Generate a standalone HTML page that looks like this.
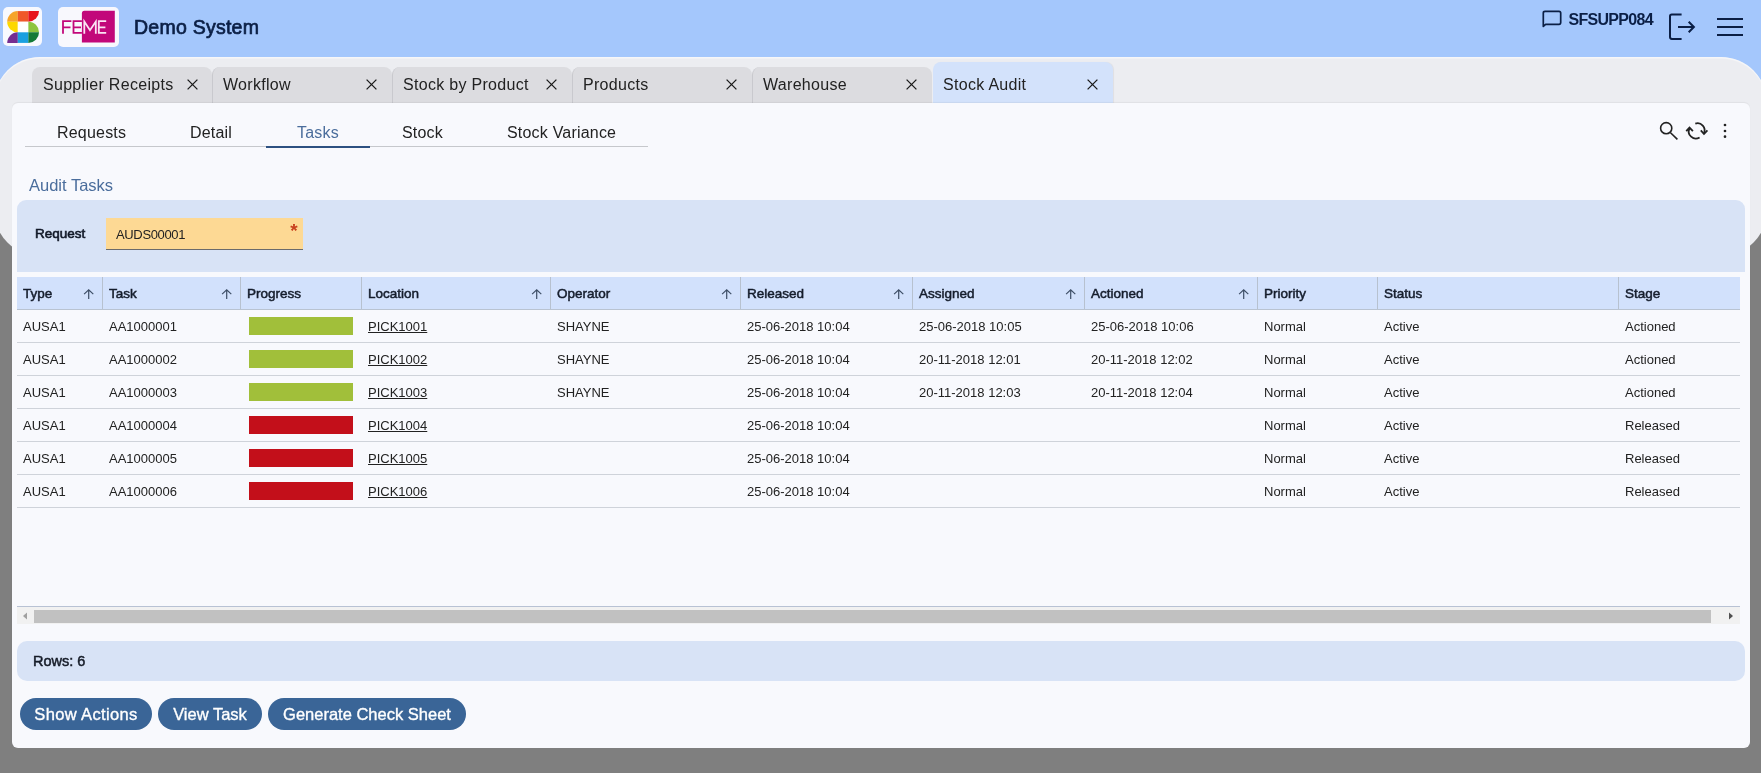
<!DOCTYPE html>
<html><head><meta charset="utf-8">
<style>
*{box-sizing:border-box;margin:0;padding:0}
html,body{width:1761px;height:773px;overflow:hidden}
body{position:relative;background:#7f7f7f;font-family:"Liberation Sans",sans-serif;color:#222}
.abs{position:absolute}
#root{position:absolute;left:0;top:0;width:1761px;height:773px;overflow:hidden;will-change:transform;background:#7f7f7f}
#hdr{left:0;top:0;width:1761px;height:140px;background:#a4c7fc}
#shape{left:-6px;top:57px;width:1773px;height:199px;border-radius:46px;background:#ecedf1;box-shadow:inset 0 1.5px 1px rgba(255,255,255,0.55)}
.logo{background:#f8f9fe;border-radius:6px}
#title{left:134px;top:16px;font-size:19.5px;letter-spacing:0.25px;font-weight:400;-webkit-text-stroke:0.7px #0b1f45;color:#0b1f45;white-space:nowrap}
#user{left:1568.5px;top:10.5px;font-size:16px;font-weight:700;letter-spacing:-0.7px;color:#0b1f45}
.tab{top:67px;height:36px;width:180px;border-left:1px solid #c9c9ce;background:#dcdce0;border-radius:8px 8px 0 0;font-size:16px;letter-spacing:0.3px;color:#222;white-space:nowrap}
.tab span{position:absolute;left:10px;top:9px}
.tab svg{position:absolute;left:153px;top:12px}
.tab.act{top:62px;height:41px;background:#d3e2fb;border-left:0;box-shadow:1px 0 1px rgba(0,0,0,0.06)}
.tab.act span{top:14px}
.tab.act svg{top:16.5px}
#panel{left:12px;top:103px;width:1738px;height:645px;background:#f8f9fd;border-radius:6px;box-shadow:0 -1px 1px rgba(0,0,0,0.05)}
.st{top:124px;font-size:16px;letter-spacing:0.2px;color:#222;white-space:nowrap}
#audit{left:29px;top:175.5px;font-size:16.5px;color:#4a6d9c;white-space:nowrap}
#filter{left:17px;top:200px;width:1728px;height:72px;background:#d8e3f6;border-radius:9px 9px 0 0}
#reqlbl{left:35px;top:225.5px;font-size:13.5px;font-weight:400;-webkit-text-stroke:0.6px #111827;color:#111827}
#inp{left:106px;top:218px;width:197px;height:32px;background:#fdd994;border-bottom:1px solid #6b6b6b}
#inp span{position:absolute;left:10px;top:9px;font-size:13px;letter-spacing:-0.35px;color:#222}
#inp i{position:absolute;left:184.2px;top:2.3px;font-style:normal;font-size:19px;color:#c8401e;font-weight:700}
#thead{left:17px;top:277px;width:1723px;height:33px;background:#d2e1fc;border-bottom:1px solid #b9c3d1}
.th{top:286px;font-size:13.5px;font-weight:400;-webkit-text-stroke:0.5px #151d2c;color:#151d2c;white-space:nowrap}
.sep{top:277px;width:1px;height:32px;background:#b7c1cf}
.arr{top:288.5px}
.rowb{left:17px;width:1723px;height:1px;background:#cfd3da}
.td{font-size:13px;color:#222;white-space:nowrap}
.bar{left:249px;width:104px;height:18px}
.lnk{text-decoration:underline}
#tbot{left:17px;top:606px;width:1723px;height:1px;background:#b8c2d4}
#sb{left:17px;top:607px;width:1723px;height:17px;background:#f1f1f1}
#thumb{left:34px;top:610px;width:1677px;height:13px;background:#c1c1c1}
#rows{left:17px;top:641px;width:1728px;height:40px;background:#d8e3f6;border-radius:10px}
#rows span{position:absolute;left:16px;top:11.5px;font-size:14.5px;font-weight:400;-webkit-text-stroke:0.5px #161c28;color:#161c28}
.btn{top:698px;height:32px;border-radius:16px;background:#3a6597;color:#fff;font-size:16.5px;white-space:nowrap}
.btn span{position:absolute;top:7px;left:0;width:100%;text-align:center;-webkit-text-stroke:0.35px #fff}
</style></head><body><div id="root">
<div id="hdr" class="abs"></div>
<div id="shape" class="abs"></div>

<!-- logos -->
<div class="abs logo" style="left:3.4px;top:7.4px;width:39px;height:39px;border-radius:5px"></div>
<svg class="abs" style="left:7px;top:11px" width="33" height="33" viewBox="-0.2 -0.1 33 33">
  <path d="M10.6 10.6L0 10.6A10.6 10.6 0 0 1 10.6 0Z" fill="#f6a42a"/>
  <rect x="10.6" y="0" width="10.65" height="10.65" fill="#f0582a"/>
  <path d="M21.2 0L31.799999999999997 0A10.6 10.6 0 0 1 21.2 10.6Z" fill="#e7141e"/>
  <path d="M10.6 10.6L10.6 21.2A10.6 10.6 0 0 1 0 10.6Z" fill="#fdd800"/>
  <rect x="10.6" y="10.6" width="10.6" height="10.6" fill="#ffffff"/>
  <path d="M21.2 21.2L21.2 10.6A10.6 10.6 0 0 1 31.799999999999997 21.2Z" fill="#8dc43f"/>
  <path d="M10.6 31.799999999999997L0 31.799999999999997A10.6 10.6 0 0 1 10.6 21.2Z" fill="#752d91"/>
  <rect x="10.6" y="21.2" width="10.65" height="10.6" fill="#1aa0e0"/>
  <path d="M21.2 21.2L31.799999999999997 21.2A10.6 10.6 0 0 1 21.2 31.799999999999997Z" fill="#137a38"/>
</svg>
<svg class="abs" style="left:58px;top:7px" width="61" height="40" viewBox="0 0 61 40">
  <rect x="0" y="0" width="61" height="40" rx="5" fill="#f8f8fd"/>
  <path d="M26.4 3.8H56.8V35.5H23.9V6.3Q23.9 3.8 26.4 3.8Z" fill="#c2077a"/>
  <path d="M5 26.8V14.15H13.4M5 20.35H12.5" fill="none" stroke="#c2077a" stroke-width="1.8"/>
  <path d="M23.9 14.15H15.5V25.9H23.9M15.5 20.35H23" fill="none" stroke="#c2077a" stroke-width="1.8"/>
  <path d="M26.3 26.8V14.6L32 23.2L37.8 14.6V26.8" fill="none" stroke="#fbe3f3" stroke-width="1.8" stroke-linejoin="miter"/>
  <path d="M48.2 14.15H40.8V25.9H48.2M40.8 20.35H47.4" fill="none" stroke="#fbe3f3" stroke-width="1.8"/>
</svg>

<div id="title" class="abs">Demo System</div>

<!-- header right -->
<svg class="abs" style="left:1541px;top:10px" width="22" height="19" viewBox="0 0 22 19">
  <path d="M2.3 16.4V3Q2.3 1.3 4 1.3H18Q19.7 1.3 19.7 3V12.6Q19.7 14.3 18 14.3H4.6Z" fill="none" stroke="#0b1f45" stroke-width="1.7" stroke-linejoin="round"/>
</svg>
<div id="user" class="abs">SFSUPP084</div>
<svg class="abs" style="left:1666px;top:12px" width="32" height="30" viewBox="0 0 32 30">
  <path d="M15.6 2.4H5.8Q4 2.4 4 4.2V25.1Q4 26.9 5.8 26.9H15.6" fill="none" stroke="#0b1f45" stroke-width="2"/>
  <path d="M12 15H28M22.7 9.7L27.9 15L22.7 20.3" fill="none" stroke="#0b1f45" stroke-width="2"/>
</svg>
<svg class="abs" style="left:1716px;top:16px" width="28" height="22" viewBox="0 0 28 22">
  <path d="M1 3H27M1 11H27M1 19H27" stroke="#0b1f45" stroke-width="2"/>
</svg>

<!-- tabs -->
<div class="abs tab" style="left:32px;border-left:0"><span style="left:11px">Supplier Receipts</span><svg style="left:155px" width="12" height="12" viewBox="0 0 12 12"><path d="M0.6 0.6L10.4 10.4M10.4 0.6L0.6 10.4" stroke="#1a1a1a" stroke-width="1.3"/></svg></div>
<div class="abs tab" style="left:212px"><span>Workflow</span><svg width="12" height="12" viewBox="0 0 12 12"><path d="M0.6 0.6L10.4 10.4M10.4 0.6L0.6 10.4" stroke="#1a1a1a" stroke-width="1.3"/></svg></div>
<div class="abs tab" style="left:392px"><span>Stock by Product</span><svg width="12" height="12" viewBox="0 0 12 12"><path d="M0.6 0.6L10.4 10.4M10.4 0.6L0.6 10.4" stroke="#1a1a1a" stroke-width="1.3"/></svg></div>
<div class="abs tab" style="left:572px"><span>Products</span><svg width="12" height="12" viewBox="0 0 12 12"><path d="M0.6 0.6L10.4 10.4M10.4 0.6L0.6 10.4" stroke="#1a1a1a" stroke-width="1.3"/></svg></div>
<div class="abs tab" style="left:752px"><span>Warehouse</span><svg width="12" height="12" viewBox="0 0 12 12"><path d="M0.6 0.6L10.4 10.4M10.4 0.6L0.6 10.4" stroke="#1a1a1a" stroke-width="1.3"/></svg></div>
<div class="abs tab act" style="left:933px;width:180px"><span>Stock Audit</span><svg style="left:153.6px" width="12" height="12" viewBox="0 0 12 12"><path d="M0.6 0.6L10.4 10.4M10.4 0.6L0.6 10.4" stroke="#1a1a1a" stroke-width="1.3"/></svg></div>

<div id="panel" class="abs"></div>

<!-- subtabs -->
<div class="abs" style="left:25px;top:146px;width:623px;height:1px;background:#c6c8cc"></div>
<div class="abs" style="left:266px;top:146px;width:104px;height:2px;background:#2d5181"></div>
<div class="abs st" style="left:57px">Requests</div>
<div class="abs st" style="left:190px">Detail</div>
<div class="abs st" style="left:297px;color:#4a6d9c">Tasks</div>
<div class="abs st" style="left:402px">Stock</div>
<div class="abs st" style="left:507px">Stock Variance</div>

<!-- toolbar icons -->
<svg class="abs" style="left:1655px;top:117px" width="80" height="26" viewBox="0 0 80 26">
  <circle cx="11.2" cy="11.2" r="5.6" fill="none" stroke="#222" stroke-width="1.6"/>
  <path d="M15.3 15.5L22.4 22.3" stroke="#222" stroke-width="1.6"/>
  <path d="M40.3 6.6A7 7 0 0 1 48.9 16.2" fill="none" stroke="#222" stroke-width="1.8"/>
  <path d="M45.8 13.4L49 17L52.4 13.4" fill="none" stroke="#222" stroke-width="1.8"/>
  <path d="M44.6 20.4A7 7 0 0 1 34.6 11.3" fill="none" stroke="#222" stroke-width="1.8"/>
  <path d="M31.2 14.2L34.5 10.6L37.9 14.2" fill="none" stroke="#222" stroke-width="1.8"/>
  <circle cx="70" cy="8" r="1.35" fill="#222"/>
  <circle cx="70" cy="14" r="1.35" fill="#222"/>
  <circle cx="70" cy="19.7" r="1.35" fill="#222"/>
</svg>

<div id="audit" class="abs">Audit Tasks</div>

<div id="filter" class="abs"></div>
<div id="reqlbl" class="abs">Request</div>
<div id="inp" class="abs"><span>AUDS00001</span><i>*</i></div>

<div id="thead" class="abs"></div>
<div class="abs sep" style="left:102px"></div>
<div class="abs sep" style="left:240px"></div>
<div class="abs sep" style="left:361px"></div>
<div class="abs sep" style="left:550px"></div>
<div class="abs sep" style="left:740px"></div>
<div class="abs sep" style="left:912px"></div>
<div class="abs sep" style="left:1084px"></div>
<div class="abs sep" style="left:1257px"></div>
<div class="abs sep" style="left:1377px"></div>
<div class="abs sep" style="left:1618px"></div>
<div class="abs th" style="left:23px">Type</div>
<svg class="abs arr" style="left:83px" width="12" height="12" viewBox="0 0 12 12"><path d="M5.7 10V1.2M1.1 5.1L5.7 0.9L10.3 5.1" fill="none" stroke="#3d4e66" stroke-width="1.2"/></svg>
<div class="abs th" style="left:109px">Task</div>
<svg class="abs arr" style="left:221px" width="12" height="12" viewBox="0 0 12 12"><path d="M5.7 10V1.2M1.1 5.1L5.7 0.9L10.3 5.1" fill="none" stroke="#3d4e66" stroke-width="1.2"/></svg>
<div class="abs th" style="left:247px">Progress</div>
<div class="abs th" style="left:368px">Location</div>
<svg class="abs arr" style="left:531px" width="12" height="12" viewBox="0 0 12 12"><path d="M5.7 10V1.2M1.1 5.1L5.7 0.9L10.3 5.1" fill="none" stroke="#3d4e66" stroke-width="1.2"/></svg>
<div class="abs th" style="left:557px">Operator</div>
<svg class="abs arr" style="left:721px" width="12" height="12" viewBox="0 0 12 12"><path d="M5.7 10V1.2M1.1 5.1L5.7 0.9L10.3 5.1" fill="none" stroke="#3d4e66" stroke-width="1.2"/></svg>
<div class="abs th" style="left:747px">Released</div>
<svg class="abs arr" style="left:893px" width="12" height="12" viewBox="0 0 12 12"><path d="M5.7 10V1.2M1.1 5.1L5.7 0.9L10.3 5.1" fill="none" stroke="#3d4e66" stroke-width="1.2"/></svg>
<div class="abs th" style="left:919px">Assigned</div>
<svg class="abs arr" style="left:1065px" width="12" height="12" viewBox="0 0 12 12"><path d="M5.7 10V1.2M1.1 5.1L5.7 0.9L10.3 5.1" fill="none" stroke="#3d4e66" stroke-width="1.2"/></svg>
<div class="abs th" style="left:1091px">Actioned</div>
<svg class="abs arr" style="left:1238px" width="12" height="12" viewBox="0 0 12 12"><path d="M5.7 10V1.2M1.1 5.1L5.7 0.9L10.3 5.1" fill="none" stroke="#3d4e66" stroke-width="1.2"/></svg>
<div class="abs th" style="left:1264px">Priority</div>
<div class="abs th" style="left:1384px">Status</div>
<div class="abs th" style="left:1625px">Stage</div>
<div class="abs rowb" style="top:342px"></div>
<div class="abs td" style="left:23px;top:319px">AUSA1</div>
<div class="abs td" style="left:109px;top:319px">AA1000001</div>
<div class="abs bar" style="top:317px;background:#a1bf3a"></div>
<div class="abs td lnk" style="left:368px;top:319px">PICK1001</div>
<div class="abs td" style="left:557px;top:319px">SHAYNE</div>
<div class="abs td" style="left:747px;top:319px">25-06-2018 10:04</div>
<div class="abs td" style="left:919px;top:319px">25-06-2018 10:05</div>
<div class="abs td" style="left:1091px;top:319px">25-06-2018 10:06</div>
<div class="abs td" style="left:1264px;top:319px">Normal</div>
<div class="abs td" style="left:1384px;top:319px">Active</div>
<div class="abs td" style="left:1625px;top:319px">Actioned</div>
<div class="abs rowb" style="top:375px"></div>
<div class="abs td" style="left:23px;top:352px">AUSA1</div>
<div class="abs td" style="left:109px;top:352px">AA1000002</div>
<div class="abs bar" style="top:350px;background:#a1bf3a"></div>
<div class="abs td lnk" style="left:368px;top:352px">PICK1002</div>
<div class="abs td" style="left:557px;top:352px">SHAYNE</div>
<div class="abs td" style="left:747px;top:352px">25-06-2018 10:04</div>
<div class="abs td" style="left:919px;top:352px">20-11-2018 12:01</div>
<div class="abs td" style="left:1091px;top:352px">20-11-2018 12:02</div>
<div class="abs td" style="left:1264px;top:352px">Normal</div>
<div class="abs td" style="left:1384px;top:352px">Active</div>
<div class="abs td" style="left:1625px;top:352px">Actioned</div>
<div class="abs rowb" style="top:408px"></div>
<div class="abs td" style="left:23px;top:385px">AUSA1</div>
<div class="abs td" style="left:109px;top:385px">AA1000003</div>
<div class="abs bar" style="top:383px;background:#a1bf3a"></div>
<div class="abs td lnk" style="left:368px;top:385px">PICK1003</div>
<div class="abs td" style="left:557px;top:385px">SHAYNE</div>
<div class="abs td" style="left:747px;top:385px">25-06-2018 10:04</div>
<div class="abs td" style="left:919px;top:385px">20-11-2018 12:03</div>
<div class="abs td" style="left:1091px;top:385px">20-11-2018 12:04</div>
<div class="abs td" style="left:1264px;top:385px">Normal</div>
<div class="abs td" style="left:1384px;top:385px">Active</div>
<div class="abs td" style="left:1625px;top:385px">Actioned</div>
<div class="abs rowb" style="top:441px"></div>
<div class="abs td" style="left:23px;top:418px">AUSA1</div>
<div class="abs td" style="left:109px;top:418px">AA1000004</div>
<div class="abs bar" style="top:416px;background:#c30f1a"></div>
<div class="abs td lnk" style="left:368px;top:418px">PICK1004</div>
<div class="abs td" style="left:747px;top:418px">25-06-2018 10:04</div>
<div class="abs td" style="left:1264px;top:418px">Normal</div>
<div class="abs td" style="left:1384px;top:418px">Active</div>
<div class="abs td" style="left:1625px;top:418px">Released</div>
<div class="abs rowb" style="top:474px"></div>
<div class="abs td" style="left:23px;top:451px">AUSA1</div>
<div class="abs td" style="left:109px;top:451px">AA1000005</div>
<div class="abs bar" style="top:449px;background:#c30f1a"></div>
<div class="abs td lnk" style="left:368px;top:451px">PICK1005</div>
<div class="abs td" style="left:747px;top:451px">25-06-2018 10:04</div>
<div class="abs td" style="left:1264px;top:451px">Normal</div>
<div class="abs td" style="left:1384px;top:451px">Active</div>
<div class="abs td" style="left:1625px;top:451px">Released</div>
<div class="abs rowb" style="top:507px"></div>
<div class="abs td" style="left:23px;top:484px">AUSA1</div>
<div class="abs td" style="left:109px;top:484px">AA1000006</div>
<div class="abs bar" style="top:482px;background:#c30f1a"></div>
<div class="abs td lnk" style="left:368px;top:484px">PICK1006</div>
<div class="abs td" style="left:747px;top:484px">25-06-2018 10:04</div>
<div class="abs td" style="left:1264px;top:484px">Normal</div>
<div class="abs td" style="left:1384px;top:484px">Active</div>
<div class="abs td" style="left:1625px;top:484px">Released</div>
<div id="tbot" class="abs"></div>
<div id="sb" class="abs"></div>
<div id="thumb" class="abs"></div>
<svg class="abs" style="left:21px;top:611px" width="8" height="10" viewBox="0 0 8 10"><path d="M6 1.5L2 5L6 8.5Z" fill="#a0a0a0"/></svg>
<svg class="abs" style="left:1727px;top:611px" width="8" height="10" viewBox="0 0 8 10"><path d="M2 1.5L6 5L2 8.5Z" fill="#505050"/></svg>
<div id="rows" class="abs"><span>Rows: 6</span></div>
<div class="abs btn" style="left:20px;width:132px"><span style="letter-spacing:0.35px">Show Actions</span></div>
<div class="abs btn" style="left:158px;width:104px"><span>View Task</span></div>
<div class="abs btn" style="left:268px;width:198px"><span>Generate Check Sheet</span></div>
</div></body></html>
